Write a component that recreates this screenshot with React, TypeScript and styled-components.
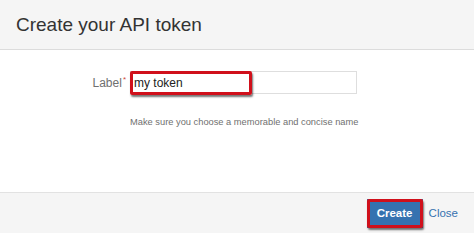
import styled, { createGlobalStyle } from 'styled-components'

const GlobalStyle = createGlobalStyle`
  html, body {
    margin: 0;
    padding: 0;
    background: #fff;
    font-family: "Liberation Sans", Arial, sans-serif;
  }
`;

const Dialog = styled.div`
  width: 474px;
  height: 233px;
  display: flex;
  flex-direction: column;
  background: #fff;
  overflow: hidden;
`;

const Header = styled.div`
  height: 50px;
  display: flex;
  align-items: center;
  padding-left: 16px;
  background: #f5f5f5;
  border-bottom: 1px solid #dcdcdc;
  box-sizing: border-box;
  h1 {
    margin: 0;
    font-size: 19px;
    font-weight: normal;
    color: #333;
  }
`;

const Body = styled.div`
  flex: 1;
  padding-top: 21px;
  display: flex;
  flex-direction: column;
`;

const FieldRow = styled.div`
  display: flex;
  align-items: center;
  gap: 4px;
`;

const FieldLabel = styled.label`
  width: 126px;
  text-align: right;
  font-size: 12px;
  color: #707070;
  sup {
    color: #d04437;
    font-size: 8px;
    margin-left: 1px;
    vertical-align: 5px;
  }
`;

const InputWrap = styled.div`
  position: relative;
  width: 227px;
  height: 23px;
`;

const TextInput = styled.input`
  width: 100%;
  height: 100%;
  box-sizing: border-box;
  border: 1px solid #dedede;
  padding: 0 3px;
  font-family: inherit;
  font-size: 12px;
  color: #222;
  outline: none;
`;

const Highlight = styled.div<{ $w: number; $h: number }>`
  position: absolute;
  left: 0;
  top: 0;
  width: ${p => p.$w}px;
  height: ${p => p.$h}px;
  box-sizing: border-box;
  border: 3px solid #d0101b;
  border-radius: 2px;
  box-shadow: 1px 2px 2px rgba(0, 0, 0, 0.55);
  pointer-events: none;
`;

const HelpText = styled.div`
  margin: 23px 0 0 130px;
  font-size: 9.3px;
  color: #707070;
`;

const Footer = styled.div`
  height: 40px;
  background: #f5f5f5;
  border-top: 1px solid #e2e2e2;
  display: flex;
  align-items: center;
  justify-content: flex-end;
  gap: 6px;
  padding-right: 16px;
`;

const ButtonWrap = styled.div`
  position: relative;
  width: 56px;
  height: 29px;
`;

const PrimaryButton = styled.button`
  width: 100%;
  height: 100%;
  border: none;
  background: #3572b0;
  color: #fff;
  font-family: inherit;
  font-weight: bold;
  font-size: 11.5px;
  padding: 0;
`;

const LinkButton = styled.a`
  color: #3572b0;
  font-size: 11.5px;
  text-decoration: none;
`;

export default function App() {
  return (
    <>
      <GlobalStyle />
      <Dialog>
        <Header>
          <h1>Create your API token</h1>
        </Header>
        <Body>
          <FieldRow>
            <FieldLabel>Label<sup>*</sup></FieldLabel>
            <InputWrap>
              <TextInput defaultValue="my token" />
              <Highlight $w={122} $h={24} />
            </InputWrap>
          </FieldRow>
          <HelpText>Make sure you choose a memorable and concise name</HelpText>
        </Body>
        <Footer>
          <ButtonWrap>
            <PrimaryButton>Create</PrimaryButton>
            <Highlight $w={56} $h={29} />
          </ButtonWrap>
          <LinkButton href="#">Close</LinkButton>
        </Footer>
      </Dialog>
    </>
  )
}
